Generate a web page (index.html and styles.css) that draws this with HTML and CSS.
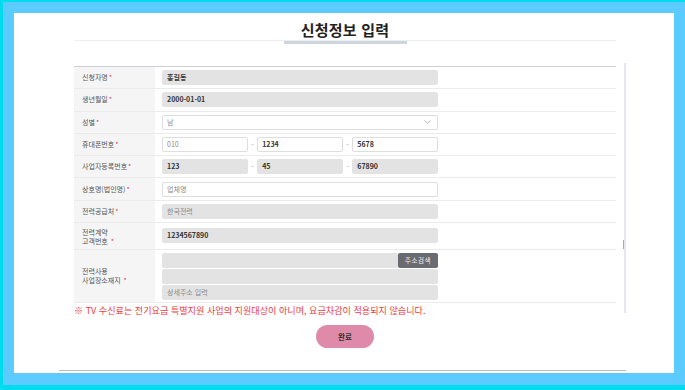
FILE: index.html
```html
<!DOCTYPE html>
<html lang="ko">
<head>
    <meta charset="UTF-8">
    <meta name="viewport" content="width=device-width, initial-scale=1.0">
    <title>신청정보 입력</title>
    <link rel="stylesheet" href="styles.css">
</head>
<body>
    <div class="frame">
        <div class="panel">
            <div class="inner">
                <div class="title-wrap">
                    <h1 class="title">신청정보 입력</h1>
                </div>
                <div class="title-bar"></div>

                <div class="form">
                    <div class="row">
                        <div class="label">신청자명 <span class="req">*</span></div>
                        <div class="value"><div class="field readonly strong">홍길동</div></div>
                    </div>
                    <div class="row">
                        <div class="label">생년월일 <span class="req">*</span></div>
                        <div class="value"><div class="field readonly strong">2000-01-01</div></div>
                    </div>
                    <div class="row">
                        <div class="label">성별 <span class="req">*</span></div>
                        <div class="value">
                            <div class="field select placeholder">남
                                <svg class="chevron" width="7" height="4" viewBox="0 0 7 4"><polyline points="0.5,0.5 3.5,3.2 6.5,0.5" fill="none" stroke="#aaa" stroke-width="0.9"/></svg>
                            </div>
                        </div>
                    </div>
                    <div class="row">
                        <div class="label">휴대폰번호 <span class="req">*</span></div>
                        <div class="value">
                            <div class="split">
                                <div class="field placeholder">010</div>
                                <span class="dash">-</span>
                                <div class="field strong">1234</div>
                                <span class="dash">-</span>
                                <div class="field strong">5678</div>
                            </div>
                        </div>
                    </div>
                    <div class="row">
                        <div class="label">사업자등록번호 <span class="req">*</span></div>
                        <div class="value">
                            <div class="split">
                                <div class="field readonly strong">123</div>
                                <span class="dash">-</span>
                                <div class="field readonly strong">45</div>
                                <span class="dash">-</span>
                                <div class="field readonly strong">67890</div>
                            </div>
                        </div>
                    </div>
                    <div class="row">
                        <div class="label">상호명(법인명) <span class="req">*</span></div>
                        <div class="value"><div class="field placeholder">업체명</div></div>
                    </div>
                    <div class="row">
                        <div class="label">전력공급처 <span class="req">*</span></div>
                        <div class="value"><div class="field readonly placeholder">한국전력</div></div>
                    </div>
                    <div class="row row-tall">
                        <div class="label">전력계약<br>고객번호 <span class="req">*</span></div>
                        <div class="value"><div class="field readonly strong">1234567890</div></div>
                    </div>
                    <div class="row row-address">
                        <div class="label">전력사용<br>사업장소재지 <span class="req">*</span></div>
                        <div class="value">
                            <div class="address">
                                <div class="address-top">
                                    <div class="field readonly"></div>
                                    <button class="search-btn">주소검색</button>
                                </div>
                                <div class="field readonly"></div>
                                <div class="field readonly placeholder">상세주소 입력</div>
                            </div>
                        </div>
                    </div>
                </div>

                <p class="notice">※ TV 수신료는 전기요금 특별지원 사업의 지원대상이 아니며, 요금차감이 적용되지 않습니다.</p>

                <div class="actions">
                    <button class="submit">완료</button>
                </div>

                <div class="scrollbar"><span class="thumb"></span></div>
            </div>
        </div>
    </div>
</body>
</html>
```

FILE: styles.css
```css
body {
    margin: 0;
    padding: 0;
    font-family: "Noto Sans CJK KR", "Noto Sans", sans-serif;
}
.frame {
    width: 685px;
    height: 390px;
    box-sizing: border-box;
    background: #5ccbff;
    border-top: 2px solid #00dcef;
    border-left: 3px solid #00dcef;
    border-bottom: 5px solid #00dcef;
    padding: 11px 0 0 11px;
}
.panel {
    width: 660px;
    height: 360px;
    background: #fff;
    padding-left: 45px;
    box-sizing: border-box;
}
.inner {
    position: relative;
    width: 567px;
    height: 358px;
    box-sizing: border-box;
    padding: 7px 10px 0 15px;
    border-bottom: 1px solid #b7bbbb;
}
.title-wrap {
    border-bottom: 1px solid #eeeeee;
}
.title {
    margin: 0;
    text-align: center;
    font-size: 15px;
    line-height: 20px;
    font-weight: 700;
    color: #222;
    letter-spacing: 0.2px;
}
.title-bar {
    width: 123px;
    height: 3px;
    margin: 0 auto;
    background: #cdd5df;
}
.form {
    margin-top: 22px;
    border-top: 1px solid #cfcfd6;
}
.row {
    display: grid;
    grid-template-columns: 81px 1fr;
    border-bottom: 1px solid #ebebeb;
}
.label {
    background: #f5f5f5;
    padding-left: 8px;
    display: flex;
    align-items: center;
    font-size: 7px;
    line-height: 9px;
    color: #555;
}
.row-tall .label,
.row-address .label {
    display: block;
    align-self: stretch;
}
.row-tall .label {
    padding-top: 5px;
}
.row-address .label {
    padding-top: 17px;
}
.req {
    color: #e8345a;
    font-size: 7px;
    margin-left: 1px;
}
.value {
    padding: 3.15px 0 3.15px 7px;
}
.row-tall .value {
    padding: 5.5px 0 5.5px 7px;
}
.row-address .value {
    padding: 3px 0 2px 7px;
}
.field {
    width: 276px;
    height: 15px;
    box-sizing: border-box;
    border: 1px solid #dedede;
    border-radius: 2px;
    background: #fff;
    padding-left: 4px;
    font-size: 7px;
    line-height: 13px;
    color: #333;
}
.field.readonly {
    background: #e3e3e3;
    border-color: #e3e3e3;
}
.field.strong {
    font-weight: 700;
    color: #333;
}
.field.placeholder {
    color: #8a8a8a;
}
.select {
    display: flex;
    justify-content: space-between;
    align-items: center;
    padding-right: 6px;
}
.split {
    display: grid;
    grid-template-columns: 1fr 9.5px 1fr 9.5px 1fr;
    width: 276px;
}
.split .field {
    width: auto;
}
.dash {
    text-align: center;
    font-size: 7px;
    line-height: 15px;
    color: #999;
}
.address {
    display: flex;
    flex-direction: column;
    gap: 1px;
}
.address-top {
    display: flex;
    width: 276px;
}
.address-top .field {
    width: auto;
    flex: 1;
    border-radius: 2px 0 0 2px;
}
.search-btn {
    width: 40px;
    height: 15px;
    border: none;
    border-radius: 2px;
    background: #6a6a72;
    color: #f0f0f0;
    font-family: inherit;
    font-size: 6.5px;
    padding: 0;
    letter-spacing: 0.5px;
}
.notice {
    margin: 1px 0 0;
    font-size: 9.1px;
    line-height: 12px;
    color: #ef3b3b;
}
.actions {
    display: flex;
    justify-content: center;
    margin-top: 9px;
}
.submit {
    width: 58px;
    height: 23px;
    border: none;
    border-radius: 12px;
    background: #e08aa9;
    color: #333;
    font-family: inherit;
    font-size: 7.5px;
    font-weight: 700;
}
.scrollbar {
    position: absolute;
    right: 0;
    top: 50px;
    width: 2px;
    height: 250px;
    background: #e7e7f2;
}
.thumb {
    position: absolute;
    left: -1px;
    top: 177px;
    width: 1px;
    height: 9px;
    background: #a9a9b0;
}
```
